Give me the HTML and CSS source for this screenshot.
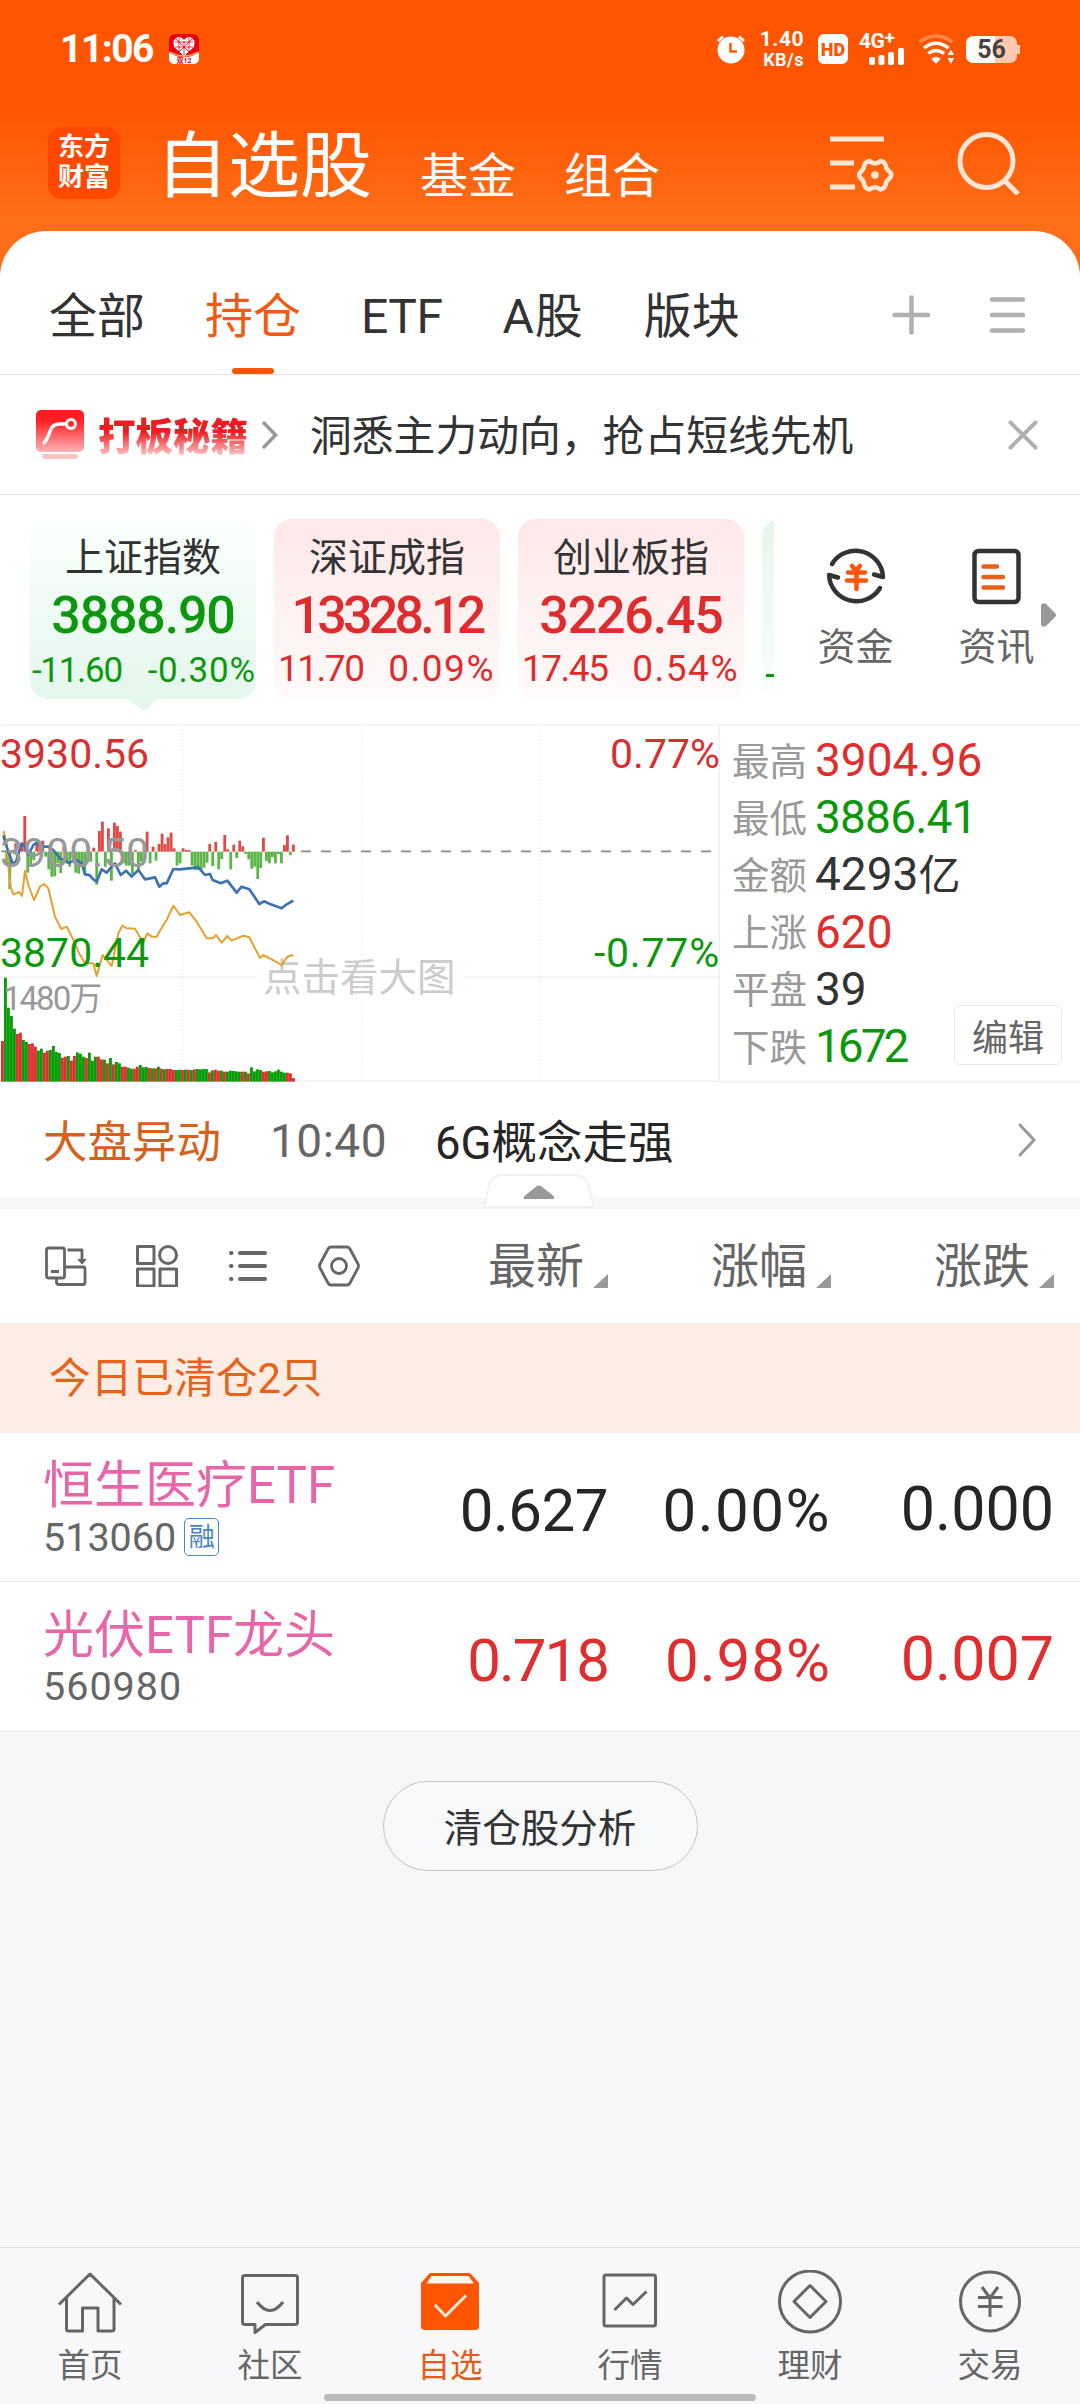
FILE: index.html
```html
<!DOCTYPE html>
<html lang="zh-CN">
<head>
    <meta charset="UTF-8">
    <meta name="viewport" content="width=device-width, initial-scale=1.0">
    <title>自选股</title>
    <link rel="stylesheet" href="styles.css">
</head>
<body>
    <!-- Header -->
    <header class="header">
        <div class="status-bar">
            <span class="time">11:06</span>
            <svg class="app-badge" width="30" height="30" viewBox="0 0 30 30">
                <rect width="30" height="30" rx="6" fill="#e60012"/>
                <path d="M0 18 Q8 24 15 23 Q22 24 30 18 V24 Q30 30 24 30 H6 Q0 30 0 24Z" fill="#fff"/>
                <path d="M1 18 Q8 22 15 22 Q22 22 29 18" fill="none" stroke="#f2a05a" stroke-width="2"/>
                <path d="M15 22 L5 13 Q3 5 9 3 Q13 3 15 6 Q17 3 21 3 Q27 5 25 13Z" fill="#fff"/>
                <path d="M6 8H24M6 13H24M10 4V17M15 7V21M20 4V17M7 5L20 18M23 5L10 18" stroke="#e60012" stroke-width=".8"/>
                <text x="15" y="28.5" font-size="7" font-weight="bold" text-anchor="middle" fill="#c01">双12</text>
            </svg>
            <div class="status-icons">
                <svg width="30" height="30" viewBox="0 0 30 30">
                    <circle cx="15" cy="16" r="13.5" fill="#fff"/>
                    <path d="M2 7 L7 2.500 M28 7 L23 2.500" stroke="#fff" stroke-width="3"/>
                    <path d="M14.500 9 V17.500 H21" fill="none" stroke="#ff5500" stroke-width="2.500"/>
                </svg>
                <div class="speed"><b>1.40</b><b>KB/s</b></div>
                <div class="hd">HD</div>
                <div class="signal">
                    <b>4G<sup>+</sup></b>
                    <svg width="36" height="17" viewBox="0 0 36 17" fill="#fff">
                        <rect x="0" y="9" width="6" height="8" rx="2"/>
                        <rect x="9.500" y="7" width="6" height="10" rx="2"/>
                        <rect x="19" y="4" width="6" height="13" rx="2"/>
                        <rect x="29" y="0" width="6" height="17" rx="2"/>
                    </svg>
                </div>
                <svg width="36" height="30" viewBox="0 0 36 30" fill="none" stroke="#fff" stroke-width="3.500">
                    <path d="M1.500 8 Q18 -4 34.500 8" stroke-opacity=".3"/>
                    <path d="M6 14 Q18 4.500 30.500 14"/>
                    <path d="M10.500 19.500 Q18 13.500 26 19.500"/>
                    <path d="M13.500 25 Q18 20.500 22.500 25 L18 30Z" fill="#fff" stroke="none"/>
                    <path d="M29.500 21 L33 15.500 L36 21Z M29.500 24 L33 30 L36 24Z" fill="#fff" stroke="none"/>
                </svg>
                <div class="battery">56</div>
            </div>
        </div>
        <div class="title-bar">
            <div class="logo">东方<br>财富</div>
            <h1>自选股</h1>
            <span class="sub">基金</span>
            <span class="sub">组合</span>
            <div class="title-icons">
                <svg width="64" height="60" viewBox="0 0 64 60" fill="none" stroke="#ffe6d5" stroke-width="5">
                    <path d="M0 6H54M0 30H24M0 54H25"/>
                    <path d="M39.500 28 Q45 33 50.500 28 Q55.500 29 56 33.500 Q56 36 60 39 Q62.500 42 60 45 Q56 48 56 50.500 Q55.500 55 50.500 56.500 Q45 52 39.500 56.500 Q34.500 55 34 50.500 Q34 48 30.500 45 Q28 42 30.500 39 Q34 36 34 33.500 Q34.500 29 39.500 28Z" stroke-width="4.500" stroke-linejoin="round"/>
                    <circle cx="45" cy="42" r="3.800" fill="#ffe6d5" stroke="none"/>
                </svg>
                <svg width="64" height="64" viewBox="0 0 64 64" fill="none" stroke="#ffe6d5" stroke-width="5">
                    <circle cx="29.500" cy="30" r="26.500"/>
                    <path d="M47 49 L61 63"/>
                </svg>
            </div>
        </div>
    </header>

    <main class="sheet">
        <!-- Tabs -->
        <nav class="tabs">
            <span>全部</span>
            <span class="active">持仓</span>
            <span>ETF</span>
            <span>A股</span>
            <span>版块</span>
            <svg class="tabs-icons" width="134" height="40" viewBox="0 0 134 40" stroke="#b0b0b0" stroke-width="4.500" stroke-linecap="round">
                <path d="M2.500 20H36M19.500 2.500V37.500M100 4.500H131M100 20H131M100 35.500H131"/>
            </svg>
        </nav>

        <!-- Notice -->
        <div class="notice">
            <svg width="48" height="50" viewBox="0 0 48 50">
                <defs>
                    <linearGradient id="redFade" x1="0" y1="0" x2="0" y2="1">
                        <stop offset=".25" stop-color="#ff1e22"/>
                        <stop offset="1" stop-color="#ffb3b6"/>
                    </linearGradient>
                </defs>
                <rect width="48" height="42" rx="5" fill="url(#redFade)"/>
                <rect x="6" y="44" width="36" height="5" rx="2.500" fill="#f8c4c6"/>
                <path d="M8 33 C16 24 12 14 24 14 H30" fill="none" stroke="#fff" stroke-width="3.500" stroke-linecap="round"/>
                <circle cx="35" cy="14" r="4.500" fill="none" stroke="#fff" stroke-width="3"/>
            </svg>
            <span class="notice-tag">打板秘籍</span>
            <svg class="notice-arrow" width="16" height="28" viewBox="0 0 16 28" fill="none" stroke="#999" stroke-width="3.500" stroke-linecap="round"><path d="M2 2L13.500 14L2 26"/></svg>
            <span class="notice-text">洞悉主力动向，抢占短线先机</span>
            <svg class="close" width="30" height="30" viewBox="0 0 30 30" stroke="#b0b0b0" stroke-width="4" stroke-linecap="round"><path d="M2.500 2.500L27.500 27.500M27.500 2.500L2.500 27.500"/></svg>
        </div>

        <!-- Index cards -->
        <section class="indexes">
            <div class="cards">
                <div class="card down selected">
                    <h3>上证指数</h3>
                    <strong>3888.90</strong>
                    <p><span>-11.60</span><span>-0.30%</span></p>
                </div>
                <div class="card up">
                    <h3>深证成指</h3>
                    <strong class="long">13328.12</strong>
                    <p><span>11.70</span><span>0.09%</span></p>
                </div>
                <div class="card up">
                    <h3>创业板指</h3>
                    <strong>3226.45</strong>
                    <p><span>17.45</span><span>0.54%</span></p>
                </div>
                <div class="card down peek"><i></i></div>
            </div>
            <div class="shortcut">
                <svg width="60" height="62" viewBox="0 0 60 62" fill="none" stroke="#333" stroke-width="4.500" stroke-linecap="round" stroke-linejoin="round">
                    <path d="M6 19 A27.500 27.500 0 0 1 57 32 L48 29.500"/>
                    <path d="M54 43 A27.500 27.500 0 0 1 3 30 L12 32.500"/>
                    <path d="M26 21 L30 26 L34 21 M22 27.500H39 M21 35.500H40 M30.500 26V44" stroke="#f9560a"/>
                </svg>
                <span>资金</span>
            </div>
            <div class="shortcut">
                <svg width="60" height="62" viewBox="0 0 60 62" fill="none" stroke="#333" stroke-width="4.500" stroke-linecap="round">
                    <rect x="7.500" y="6" width="44" height="51" rx="4"/>
                    <path d="M16.500 21.500H30 M16.500 32H36 M16.500 42.500H36" stroke="#e8601a"/>
                </svg>
                <span>资讯</span>
            </div>
            <svg class="more" width="15" height="24" viewBox="0 0 15 24"><path d="M0 2Q2 -1 5 1L14 10Q16 12 14 14L5 23Q2 25 0 22Z" fill="#999"/></svg>
        </section>

        <!-- Intraday chart -->
        <section class="market">
            <div class="chart">
                <span class="label hint">点击看大图</span>
                <svg id="chart" width="720" height="358" viewBox="0 12 2160 1074"></svg>
                <span class="label high">3930.56</span>
                <span class="label mid">3900.50</span>
                <span class="label low">3870.44</span>
                <span class="label volume">1480万</span>
                <span class="label high-pct">0.77%</span>
                <span class="label low-pct">-0.77%</span>
            </div>
            <div class="stats">
                <dl>
                    <dt>最高</dt><dd class="red">3904.96</dd>
                    <dt>最低</dt><dd class="green">3886.41</dd>
                    <dt>金额</dt><dd>4293<small>亿</small></dd>
                    <dt>上涨</dt><dd class="red">620</dd>
                    <dt>平盘</dt><dd>39</dd>
                    <dt>下跌</dt><dd class="green narrow">1672</dd>
                </dl>
                <button class="edit">编辑</button>
            </div>
        </section>

        <!-- Market news -->
        <div class="news">
            <span class="news-tag">大盘异动</span>
            <span class="news-time">10:40</span>
            <span class="news-text">6G概念走强</span>
            <svg width="18" height="34" viewBox="0 0 18 34" fill="none" stroke="#999" stroke-width="3" stroke-linecap="round"><path d="M2 2L16 17L2 32"/></svg>
        </div>
        <div class="divider">
            <svg class="handle" width="112" height="34" viewBox="0 0 112 34">
                <path d="M1 33 L6 12 Q9 1 21 1 H91 Q103 1 106 12 L111 33Z" fill="#fff" stroke="#f0f1f3" stroke-width="2"/>
                <path d="M41 25 Q40 23 42 21.500 L54 12 Q56 11 58 12 L70 21.500 Q72 23 71 25Z" fill="#999"/>
            </svg>
        </div>

        <!-- Stock list -->
        <div class="list-head">
            <div class="tools">
                <svg width="42" height="42" viewBox="0 0 42 42" fill="none" stroke="#666" stroke-width="2.800" stroke-linejoin="round">
                    <rect x="1.500" y="3" width="18" height="30" rx="2"/>
                    <path d="M6 26.500H14M19 22H38Q40 22 40 24V37Q40 39.500 38 39.500H14Q11.500 39.500 11.500 37V33M22.500 5H37V16"/>
                    <path d="M33 14.500H41L37 19Z" fill="#666" stroke-width="1"/>
                </svg>
                <svg width="42" height="42" viewBox="0 0 42 42" fill="none" stroke="#666" stroke-width="3" stroke-linejoin="round">
                    <rect x="1.500" y="1.500" width="16.500" height="17"/>
                    <circle cx="32" cy="10" r="8.500"/>
                    <rect x="1.500" y="24" width="16.500" height="17"/>
                    <rect x="24" y="24" width="16.500" height="17"/>
                </svg>
                <svg width="42" height="42" viewBox="0 0 42 42" stroke="#666" stroke-width="4" stroke-linecap="round">
                    <path d="M4 8H4.500M4 21H4.500M4 34H4.500M13 8H38M13 21H38M13 34H38"/>
                </svg>
                <svg width="42" height="42" viewBox="0 0 42 42" fill="none" stroke="#666" stroke-width="2.800" stroke-linejoin="round">
                    <path d="M13 2H29Q31 2 32 4L40 19Q41 21 40 23L32 38Q31 40 29 40H13Q11 40 10 38L2 23Q1 21 2 19L10 4Q11 2 13 2Z"/>
                    <circle cx="21" cy="21" r="7.500"/>
                </svg>
            </div>
            <span>最新<i></i></span>
            <span>涨幅<i></i></span>
            <span>涨跌<i></i></span>
        </div>
        <div class="banner">今日已清仓2只</div>
        <div class="stock">
            <div class="stock-name">
                <h2>恒生医疗ETF</h2>
                <p>513060<em>融</em></p>
            </div>
            <span class="price">0.627</span><span class="percent">0.00%</span><span class="change">0.000</span>
        </div>
        <div class="stock rise">
            <div class="stock-name">
                <h2>光伏ETF龙头</h2>
                <p>560980</p>
            </div>
            <span class="price">0.718</span><span class="percent">0.98%</span><span class="change">0.007</span>
        </div>
    </main>

    <div class="analysis">
        <button>清仓股分析</button>
    </div>

    <!-- Bottom navigation -->
    <footer class="bottom-nav">
        <a>
            <svg width="66" height="66" viewBox="0 0 66 66"><path d="M2 34.500L33 4L64 34.500M9.500 28V59Q9.500 61 11.500 61H25.500V38H41V61H55Q57 61 57 59V28"/></svg>
            首页
        </a>
        <a>
            <svg width="66" height="66" viewBox="0 0 66 66"><path d="M8 5.500H58Q60.500 5.500 60.500 8V52Q60.500 54.500 58 54.500H28.500L18 62.500V54.500H8Q5.500 54.500 5.500 52V8Q5.500 5.500 8 5.500Z"/><path d="M20 32Q33 49 46 32"/></svg>
            社区
        </a>
        <a class="active">
            <svg width="66" height="66" viewBox="0 0 66 66"><path d="M13 3H53L62 13V56Q62 60 58 60H8Q4 60 4 56V13Z" fill="#ff5500" stroke="none"/><path d="M14.500 6H51.500L57 13.500H9.500Z" fill="#fff6ef" stroke="none"/><path d="M18 35L28.500 46L49 25.500" stroke="#ffe9dc"/></svg>
            自选
        </a>
        <a>
            <svg width="66" height="66" viewBox="0 0 66 66"><rect x="7" y="5" width="51.500" height="51" rx="2"/><path d="M17.500 40L29.500 28L36 34.500L49.500 21.500"/></svg>
            行情
        </a>
        <a>
            <svg width="66" height="66" viewBox="0 0 66 66"><ellipse cx="33" cy="31.500" rx="30.500" ry="30.500"/><path d="M33 15.500L49 31.500L33 47.500L17 31.500Z"/></svg>
            理财
        </a>
        <a>
            <svg width="66" height="66" viewBox="0 0 66 66"><circle cx="33" cy="31.500" r="29.500"/><path d="M25 17L33 28L41 17M21 27.500H45.500M21 36.500H45.500M33 28V47"/></svg>
            交易
        </a>
    </footer>
    <div class="home-bar"></div>

    <script>
        const chart = document.getElementById('chart');
        const base = 395;
        let out = '';

        // Grid
        [548, 1085, 1620].forEach(x => {
            out += `<path d="M${x} 18V1080" stroke="#f0f0f0" stroke-width="4" stroke-dasharray="4 6"/>`;
        });
        out += '<path d="M4 14H2160M0 771H772M1390 771H2160M0 1084H2160M2158 12V1086" stroke="#f0f1f2" stroke-width="5"/>';
        out += '<path d="M903 394H2140M4 394H18" stroke="#888" stroke-width="5" stroke-dasharray="30 30"/>';

        // Money flow above and below the previous close: [x, y]
        const flow = [[20,430],[29,507],[47,370],[65,376],[74,288],[83,458],[92,435],[101,420],[110,365],[119,378],[128,362],[137,410],[146,448],[155,470],[164,469],[173,430],[182,459],[191,380],[200,430],[209,440],[218,415],[227,458],[236,461],[245,430],[254,460],[263,378],[272,425],[281,383],[290,494],[298,333],[307,305],[316,440],[325,325],[334,482],[343,308],[352,318],[361,335],[370,430],[379,437],[388,437],[397,462],[406,390],[415,450],[424,425],[432,380],[441,335],[450,430],[459,380],[468,422],[477,372],[486,341],[495,372],[504,352],[513,338],[522,385],[531,437],[540,430],[549,385],[558,390],[567,390],[576,437],[585,450],[594,450],[603,454],[612,443],[621,428],[629,372],[638,438],[647,366],[656,448],[665,417],[674,345],[683,388],[692,448],[701,374],[710,414],[719,362],[728,379],[737,402],[746,418],[755,446],[764,440],[773,477],[782,444],[790,353],[799,423],[808,430],[817,412],[826,430],[835,402],[844,430],[853,375],[862,346],[871,405],[880,374]];
        flow.forEach(([x, y]) => {
            out += `<rect x="${x - 4}" y="${Math.min(y, base)}" width="8.500" height="${Math.abs(y - base)}" fill="${y < base ? '#e04a46' : '#5cb548'}"/>`;
        });

        // Volume bars
        const volume = [963,773,863,888,926,942,938,960,966,972,970,980,992,986,998,992,990,978,996,999,1013,1010,1008,1022,1008,997,1001,1010,1014,998,1022,1010,1010,1018,1019,1030,1014,1033,1026,1030,1040,1040,1043,1046,1046,1040,1035,1042,1041,1044,1045,1045,1040,1046,1048,1047,1047,1050,1050,1049,1050,1049,1049,1050,1048,1047,1048,1047,1047,1057,1051,1049,1052,1052,1055,1055,1052,1053,1054,1055,1055,1055,1060,1042,1054,1048,1050,1055,1054,1053,1057,1054,1049,1055,1058,1058,1060,1074];
        const colors = 'RGGGGRRGGRRRGGRRGGGGRRGRRGGGRGGGRRGRGRGGRRGGRRGGGRGRGRGRRRGGRGRGRGGGGRGRRGRGGGGGRGRGGGGRRGGGGGGRRRR';
        volume.forEach((y, i) => {
            out += `<rect x="${3 + i * 9}" y="${y}" width="8.600" height="${1085 - y}" fill="${colors[i] === 'R' ? '#e03030' : '#0a9d0a'}"/>`;
        });

        // Average and price lines
        out += '<polyline fill="none" stroke="#e6a030" stroke-width="6" stroke-linejoin="round" points="11,333 20,370 25,440 32,500 40,523 58,516 66,528 75,452 85,495 102,540 120,500 132,492 145,505 165,590 184,627 200,620 218,655 235,695 255,730 280,730 290,768 308,705 320,720 335,738 355,640 367,617 380,625 405,626 430,668 442,640 455,650 470,650 490,615 500,600 520,557 540,585 568,577 590,605 620,655 638,655 648,645 665,668 682,648 695,662 730,647 748,652 780,714 790,705 822,722 845,735 862,710 880,705"/>';
        out += '<polyline fill="none" stroke="#3b72b0" stroke-width="8" stroke-linejoin="round" points="10,346 15,365 25,395 38,430 48,425 65,370 75,380 85,405 100,375 110,368 125,380 145,380 160,390 180,415 205,428 230,420 245,430 255,463 268,465 280,478 290,485 305,448 320,458 335,440 345,430 362,465 378,452 395,470 415,450 435,478 465,472 478,500 490,490 500,490 520,447 540,448 595,442 615,465 630,462 638,480 662,490 682,482 710,518 725,500 748,508 778,552 792,544 810,552 845,565 860,553 880,542"/>';
        chart.innerHTML = out;
    </script>
</body>
</html>
```
FILE: styles.css
```css
/* General Styles */
* {
    box-sizing: border-box;
    margin: 0;
    padding: 0;
}

body {
    width: 1080px;
    height: 2404px;
    overflow: hidden;
    display: flex;
    flex-direction: column;
    font-family: Roboto, 'Noto Sans CJK SC', sans-serif;
    font-weight: 400;
    color: #333;
    background: #f6f7f9;
}

h1, h2, h3 {
    font-weight: 400;
}

svg {
    display: block;
    flex-shrink: 0;
}

i, em {
    font-style: normal;
}

button {
    font-family: inherit;
    color: inherit;
}

.red {
    color: #e02d2d;
}

.green {
    color: #0c980c;
}

/* Header */
.header {
    height: 280px;
    flex-shrink: 0;
    background: linear-gradient(#ff5500 0, #ff5500 108px, #ff6f1a 225px);
    color: #fff;
}

.status-bar {
    display: flex;
    align-items: center;
    height: 97px;
    padding: 0 60px;
}

.time {
    width: 109px;
    font-size: 39px;
    font-weight: 700;
    letter-spacing: -1.500px;
}

.status-icons {
    display: flex;
    align-items: center;
    margin-left: auto;
}

.speed {
    display: flex;
    flex-direction: column;
    align-items: flex-end;
    width: 58px;
    font-size: 21px;
    line-height: 22px;
    letter-spacing: 0.5px;
}

.speed b + b {
    font-size: 18px;
    line-height: 19px;
}

.hd {
    width: 30px;
    height: 30px;
    margin-left: 14px;
    border-radius: 6px;
    background: #fff;
    color: #ff5500;
    font-size: 18px;
    font-weight: 900;
    line-height: 31px;
    text-align: center;
}

.signal {
    width: 46px;
    height: 32px;
    margin: 0 13px 0 11px;
    font-size: 21px;
    line-height: 17px;
    letter-spacing: -0.5px;
}

.signal sup {
    font-size: 19px;
    line-height: 0;
    vertical-align: 4px;
}

.signal svg {
    margin: -2px 0 0 10px;
}

.battery {
    position: relative;
    width: 51px;
    height: 27px;
    margin: 2px 3px 0 12px;
    border-radius: 7px;
    background: linear-gradient(90deg, #fff 56%, #ffc9b0 56%);
    color: #4a403c;
    font-size: 25px;
    font-weight: 700;
    line-height: 28px;
    text-align: center;
}

.battery::after {
    content: '';
    position: absolute;
    right: -3px;
    top: 9px;
    width: 3px;
    height: 9px;
    background: #ffc9b0;
}

.title-bar {
    display: flex;
    align-items: center;
    height: 132px;
    padding: 0 59px 0 48px;
}

.logo {
    width: 72px;
    height: 72px;
    border-radius: 14px;
    background: #ff4800;
    font-size: 26px;
    font-weight: 700;
    line-height: 30px;
    padding-top: 5px;
    text-align: center;
}

.title-bar h1 {
    margin: 0 48px 0 36px;
    padding-top: 7px;
    font-size: 72px;
    line-height: 100px;
}

.sub {
    margin-right: 48px;
    padding-top: 28px;
    font-size: 48px;
    line-height: 60px;
}

.title-icons {
    display: flex;
    align-items: center;
    gap: 63px;
    margin-left: auto;
}

/* Sheet */
.sheet {
    flex-shrink: 0;
    margin-top: -49px;
    border-radius: 46px 46px 0 0;
    background: #fff;
}

.tabs {
    display: flex;
    align-items: center;
    gap: 60px;
    height: 144px;
    padding: 25px 54px 0 49px;
    border-bottom: 1px solid #e4e4e4;
    font-size: 48px;
}

.tabs span {
    position: relative;
    padding-top: 3px;
    line-height: 115px;
}

.tabs span:nth-child(3) {
    letter-spacing: -0.5px;
}

.tabs span:nth-child(4) {
    letter-spacing: 1px;
}

.tabs .active {
    color: #f3590f;
}

.tabs .active::after {
    content: '';
    position: absolute;
    left: 27px;
    bottom: 0;
    width: 42px;
    height: 6px;
    border-radius: 3px;
    background: #f9560a;
}

.tabs-icons {
    margin-left: auto;
}

/* Notice */
.notice {
    display: flex;
    align-items: center;
    height: 120px;
    padding: 0 42px 0 36px;
    border-bottom: 1px solid #e4e4e4;
}

.notice-tag {
    margin-left: 14px;
    padding-bottom: 2px;
    font-size: 37.500px;
    font-weight: 900;
    background: linear-gradient(#ec1c20 45%, #ffb0b2 82%);
    -webkit-background-clip: text;
    background-clip: text;
    color: transparent;
}

.notice-arrow {
    margin: 0 32px 0 14px;
}

.notice-text {
    padding-bottom: 3px;
    font-size: 41.800px;
}

.close {
    margin-left: auto;
}

/* Index cards */
.indexes {
    position: relative;
    display: flex;
    height: 229px;
    padding: 24px 0 0 30px;
}

.cards {
    display: flex;
    gap: 18px;
    width: 744px;
    height: 205px;
    overflow: hidden;
}

.card {
    position: relative;
    flex: 0 0 226px;
    height: 180px;
    border-radius: 18px;
    text-align: center;
    white-space: nowrap;
}

.card h3 {
    padding-top: 10px;
    color: #333;
    font-size: 39px;
    line-height: 58px;
}

.card strong {
    display: block;
    font-size: 52px;
    font-weight: 500;
    line-height: 58px;
    letter-spacing: -1.200px;
}

.card .long {
    letter-spacing: -3.800px;
}

.card p {
    display: flex;
    justify-content: space-between;
    padding: 1px 5px 0 4px;
    font-size: 37px;
    line-height: 46px;
    letter-spacing: -1.500px;
}

.card p span + span {
    letter-spacing: 1.500px;
}

.up {
    background: linear-gradient(#ffe8e9, #fffafa);
    color: #de2c2c;
}

.down {
    background: linear-gradient(#fbfffd, #e4f7ed);
    color: #0c980c;
}

.card.selected p {
    padding: 3px 0 0 2px;
    font-size: 35px;
    letter-spacing: -1.300px;
}

.card.selected p span + span {
    letter-spacing: 0.800px;
}

.selected::after {
    content: '';
    position: absolute;
    left: 98px;
    top: 180px;
    border: 15px solid transparent;
    border-top: 12px solid #e4f7ed;
    border-bottom: 0;
}

.peek {
    background: linear-gradient(#e4f7ed, #fbfffd);
}

.peek i {
    display: block;
    width: 12px;
    height: 3px;
    margin: 155px 0 0 4px;
    background: #0c980c;
}

.shortcut {
    display: flex;
    flex-direction: column;
    align-items: center;
    width: 141px;
    padding-top: 26px;
    color: #666;
    font-size: 38px;
    line-height: 80px;
}

.shortcut:nth-child(2) {
    margin-left: 11px;
}

.more {
    position: absolute;
    left: 1041px;
    top: 108px;
}

/* Intraday chart */
.market {
    display: flex;
    height: 359px;
}

.chart {
    position: relative;
    width: 720px;
}

#chart {
    position: relative;
}

.label {
    position: absolute;
    left: 0;
    font-size: 41px;
    line-height: 40px;
}

.high {
    top: 10px;
    color: #d83030;
}

.mid {
    top: 109px;
    color: #999;
}

.low {
    top: 209px;
    color: #0c980c;
}

.volume {
    left: 3px;
    top: 255px;
    color: #999;
    font-size: 33px;
    letter-spacing: -2px;
}

.high-pct {
    left: auto;
    right: 0;
    top: 10px;
    color: #d83030;
}

.low-pct {
    left: auto;
    right: 0;
    top: 209px;
    color: #0c980c;
    letter-spacing: 0.800px;
}

.hint {
    left: 263px;
    top: 234px;
    color: #ccc;
    font-size: 38.500px;
}

.stats {
    position: relative;
    flex: 1;
    border-top: 2px solid #f3f4f5;
    border-bottom: 2px solid #f3f4f5;
}

.stats dl {
    display: grid;
    grid-template-columns: 83px 1fr;
    grid-auto-rows: 57.200px;
    padding: 6px 0 0 12px;
    align-items: center;
}

.stats dt {
    padding-bottom: 5px;
    color: #999;
    font-size: 37.500px;
}

.stats dd {
    font-size: 46px;
    line-height: 57px;
}

.stats .green {
    letter-spacing: -0.800px;
}

.stats .narrow {
    letter-spacing: -3px;
}

.stats small {
    font-size: 42px;
}

.edit {
    position: absolute;
    right: 18px;
    bottom: 16px;
    width: 108px;
    height: 60px;
    border: 1px solid #e8e8e8;
    border-radius: 6px;
    background: #fff;
    color: #666;
    font-size: 36px;
}

/* Market news */
.news {
    display: flex;
    align-items: center;
    height: 114px;
    padding: 0 44px 0 43px;
    font-size: 45.500px;
    color: #262626;
}

.news svg {
    margin-left: auto;
}

.news-tag {
    width: 227px;
    padding-bottom: 3px;
    font-size: 44.500px;
    color: #d9601a;
}

.news-time {
    width: 165px;
    padding-top: 2px;
    color: #666;
    font-size: 46px;
    letter-spacing: 0.5px;
}

.news-text {
    padding-bottom: 3px;
}

.divider {
    position: relative;
    height: 12px;
    background: #f5f7f9;
}

.handle {
    position: absolute;
    left: 483px;
    top: -23px;
}

/* Stock list */
.list-head,
.stock {
    display: grid;
    grid-template-columns: 385px 223px 223px 223px;
    align-items: center;
}

.list-head {
    height: 114px;
    color: #666;
    font-size: 48px;
    text-align: right;
}

.tools {
    display: flex;
    gap: 49px;
    padding-left: 45px;
}

.list-head span {
    padding-top: 2px;
    line-height: 60px;
}

.list-head i {
    display: inline-block;
    margin: 0 0 -5px 9px;
    border-left: 15px solid transparent;
    border-bottom: 14px solid #999;
}

.banner {
    height: 110px;
    padding-left: 49px;
    border-top: 1px solid #ececec;
    background: #feede4;
    color: #e8621a;
    font-size: 41.700px;
    line-height: 109px;
}

.stock {
    height: 149px;
    border-bottom: 1px solid #e8e8e8;
    color: #262626;
}

.stock + .stock {
    height: 150px;
}

.stock > span {
    font-size: 60px;
    line-height: 80px;
    padding-top: 8px;
    text-align: right;
}

.stock > .price {
    letter-spacing: -0.500px;
}

.stock > .percent {
    letter-spacing: 1.500px;
}

.stock > .change {
    padding-top: 4px;
    font-size: 61px;
}

.rise {
    color: #e02d2d;
}

.rise > .price {
    letter-spacing: -2px;
}

.rise > .percent {
    letter-spacing: 1px;
}

.stock-name {
    padding: 4px 0 0 43px;
    white-space: nowrap;
}

.stock-name h2 {
    color: #e965a9;
    font-size: 51px;
    line-height: 56px;
}

.stock-name p {
    display: flex;
    align-items: center;
    height: 46px;
    color: #666;
    font-size: 39.500px;
}

.rise .stock-name p {
    letter-spacing: 1px;
}

.stock-name em {
    width: 35px;
    height: 38px;
    margin-left: 8px;
    border: 1px solid #4a86c0;
    border-radius: 5px;
    color: #4a86c0;
    font-size: 26px;
    line-height: 36px;
    text-align: center;
}

/* Analysis */
.analysis {
    flex: 1;
    padding-top: 49px;
    text-align: center;
}

.analysis button {
    width: 315px;
    height: 90px;
    padding-bottom: 3px;
    border: 1px solid #c4c4c4;
    border-radius: 45px;
    background: #f8f9fb;
    font-size: 38.500px;
}

/* Bottom navigation */
.bottom-nav {
    display: flex;
    height: 147px;
    flex-shrink: 0;
    border-top: 1px solid #e0e0e2;
    background: #f8f8fa;
}

.bottom-nav a {
    display: flex;
    flex-direction: column;
    align-items: center;
    width: 180px;
    padding-top: 22px;
    color: #666;
    font-size: 32.500px;
    line-height: 61px;
}

.bottom-nav svg {
    fill: none;
    stroke: #666;
    stroke-width: 3;
    stroke-linejoin: round;
}

.bottom-nav .active {
    color: #e05c18;
}

.home-bar {
    flex-shrink: 0;
    width: 432px;
    height: 7px;
    margin: 0 auto 3px;
    border-radius: 4px;
    background: #bbb;
}
```
